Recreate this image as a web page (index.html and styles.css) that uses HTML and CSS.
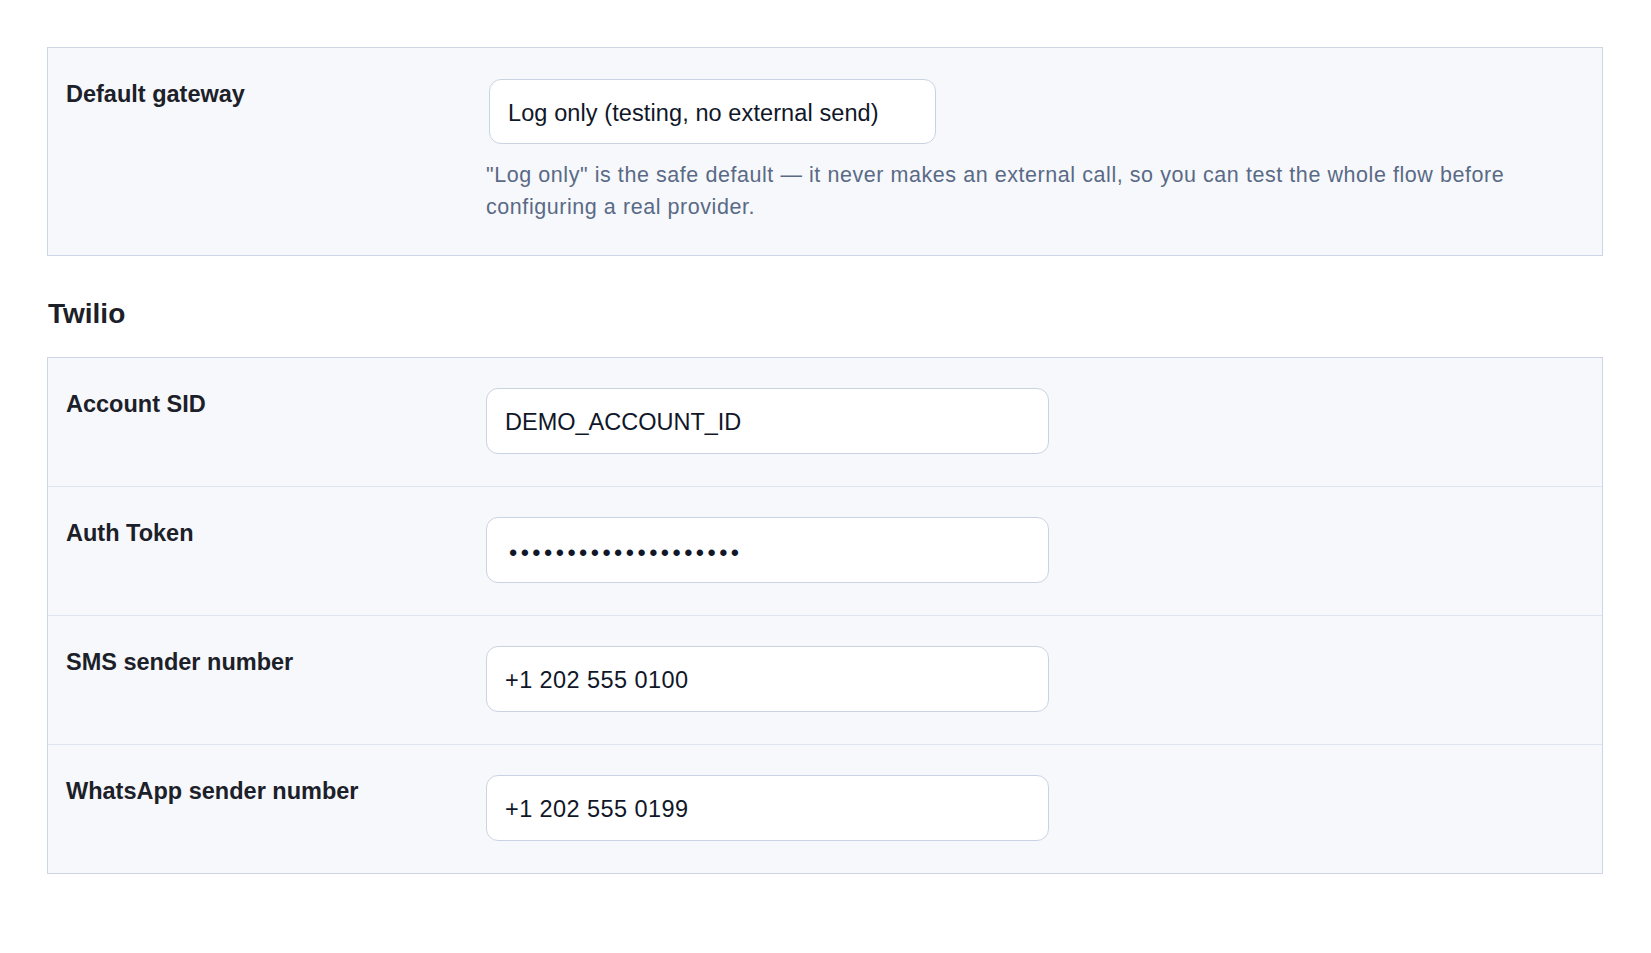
FILE: index.html
```html
<!DOCTYPE html>
<html lang="en">
<head>
<meta charset="utf-8">
<title>SMS gateway settings</title>
<link rel="stylesheet" href="styles.css">
</head>
<body>
<main class="page">
  <section class="panel">
    <div class="row">
      <label class="label" for="gateway">Default gateway</label>
      <div class="field">
        <select class="select" id="gateway">
          <option>Log only (testing, no external send)</option>
        </select>
        <p class="help">"Log only" is the safe default — it never makes an external call, so you can test the whole flow before configuring a real provider.</p>
      </div>
    </div>
  </section>

  <h2 class="section-title">Twilio</h2>

  <section class="panel">
    <div class="row">
      <label class="label" for="sid">Account SID</label>
      <div class="field"><input class="input" id="sid" type="text" value="DEMO_ACCOUNT_ID"></div>
    </div>
    <div class="row">
      <label class="label" for="token">Auth Token</label>
      <div class="field"><input class="input input-secret" id="token" type="password" value="abcdefghijklmnopqrst"></div>
    </div>
    <div class="row">
      <label class="label" for="sms">SMS sender number</label>
      <div class="field"><input class="input input-phone" id="sms" type="text" value="+1 202 555 0100"></div>
    </div>
    <div class="row">
      <label class="label" for="wa">WhatsApp sender number</label>
      <div class="field"><input class="input input-phone" id="wa" type="text" value="+1 202 555 0199"></div>
    </div>
  </section>
</main>
</body>
</html>
```

FILE: styles.css
```css
* { box-sizing: border-box; }

html, body {
  margin: 0;
  padding: 0;
  background: #ffffff;
}

body {
  font-family: "Liberation Sans", Arial, Helvetica, sans-serif;
  color: #1c2029;
}

.page {
  padding: 47px 48px 0 47px;
}

.panel {
  border: 1px solid #ccd6e5;
  background: #f6f8fb;
}

.row {
  display: grid;
  grid-template-columns: 421px 1fr;
  padding: 30px 17px 32px 18px;
  border-top: 1px solid #dfe5ee;
}

.row:first-child {
  border-top: 0;
}

.label {
  font-size: 23.5px;
  line-height: 1.4;
  font-weight: 700;
  color: #1c2029;
}

.field {
  display: flex;
  flex-direction: column;
  align-items: flex-start;
  margin-left: -1px;
}

.select {
  -webkit-appearance: none;
  appearance: none;
  width: 447px;
  height: 65px;
  margin: 1px 0 0 3px;
  padding: 2px 18px 0 18px;
  border: 1px solid #c9d3e1;
  border-radius: 12px;
  background: #ffffff;
  font-family: inherit;
  font-size: 23.5px;
  letter-spacing: 0.1px;
  color: #0f1729;
}

.help {
  margin: 16px 0 0 0;
  font-size: 21.5px;
  letter-spacing: 0.56px;
  line-height: 31.7px;
  color: #5a6a86;
}

.section-title {
  margin: 41px 0 26px 1px;
  font-size: 28px;
  line-height: 1.2;
  font-weight: 700;
  color: #1c2029;
}

.input {
  width: 563px;
  height: 66px;
  padding: 3px 18px 0 18px;
  border: 1px solid #c9d3e1;
  border-radius: 12px;
  background: #ffffff;
  font-family: inherit;
  font-size: 23.5px;
  color: #0f1729;
  outline: none;
}

.input-secret {
  padding-top: 6px;
  padding-left: 22px;
  letter-spacing: 3.45px;
}

.input-phone {
  letter-spacing: 0.42px;
}
```
